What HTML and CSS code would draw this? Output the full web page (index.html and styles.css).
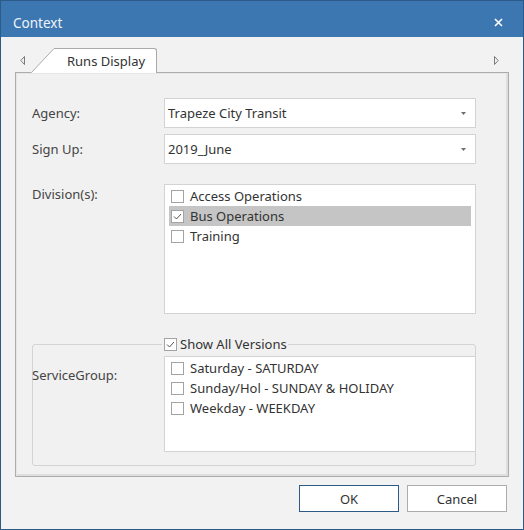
FILE: index.html
```html
<!DOCTYPE html>
<html>
<head>
<meta charset="utf-8">
<link rel="stylesheet" href="styles.css">
</head>
<body>
<div class="window">
  <div class="titlebar">
    <span class="title">Context</span>
    <svg class="close" width="9" height="9" viewBox="0 0 9 9"><path d="M1 1L8 8M8 1L1 8" stroke="#fff" stroke-width="1.6" fill="none"/></svg>
  </div>
  <div class="body">
    <div class="tabrow">
      <svg class="nav nav-left" width="5" height="9" viewBox="0 0 5 9"><path d="M4.5 0.5L0.8 4.5L4.5 8.5Z" fill="none" stroke="#7a7a7a" stroke-width="1"/></svg>
      <div class="tab">
        <svg class="tab-slant" width="23" height="25" viewBox="0 0 23 25"><path d="M0 25L23 0L23 25Z" fill="#fff"/><path d="M0.5 24.5L23 0.5" stroke="#a9a9a9" stroke-width="1" fill="none"/></svg>
        <div class="tab-label">Runs Display</div>
      </div>
      <svg class="nav nav-right" width="5" height="9" viewBox="0 0 5 9"><path d="M0.5 0.5L4.2 4.5L0.5 8.5Z" fill="none" stroke="#7a7a7a" stroke-width="1"/></svg>
    </div>
    <div class="panel">
      <div class="row row-combo">
        <div class="lbl">Agency:</div>
        <div class="combo"><span>Trapeze City Transit</span><svg class="drop" width="5" height="3" viewBox="0 0 5 3"><path d="M0 0H5L2.5 3Z" fill="#6e6e6e"/></svg></div>
      </div>
      <div class="row row-combo row-signup">
        <div class="lbl">Sign Up:</div>
        <div class="combo"><span>2019_June</span><svg class="drop" width="5" height="3" viewBox="0 0 5 3"><path d="M0 0H5L2.5 3Z" fill="#6e6e6e"/></svg></div>
      </div>
      <div class="row row-div">
        <div class="lbl lbl-list">Division(s):</div>
        <div class="checklist divisions">
          <div class="item"><span class="cb"></span><span>Access Operations</span></div>
          <div class="item selected"><span class="cb"><svg width="11" height="11" viewBox="0 0 11 11"><path d="M2 5.5L4.5 8L9 3" stroke="#555" stroke-width="1" fill="none"/></svg></span><span>Bus Operations</span></div>
          <div class="item"><span class="cb"></span><span>Training</span></div>
        </div>
      </div>
      <fieldset class="group">
        <legend class="legend"><span class="cb"><svg width="11" height="11" viewBox="0 0 11 11"><path d="M2 5.5L4.5 8L9 3" stroke="#555" stroke-width="1" fill="none"/></svg></span><span>Show All Versions</span></legend>
        <div class="group-row">
          <div class="lbl lbl-group">ServiceGroup:</div>
          <div class="checklist services">
            <div class="item"><span class="cb"></span><span>Saturday - SATURDAY</span></div>
            <div class="item"><span class="cb"></span><span>Sunday/Hol - SUNDAY &amp; HOLIDAY</span></div>
            <div class="item"><span class="cb"></span><span>Weekday - WEEKDAY</span></div>
          </div>
        </div>
      </fieldset>
    </div>
    <div class="footer">
      <button class="btn btn-ok">OK</button>
      <button class="btn">Cancel</button>
    </div>
  </div>
</div>
</body>
</html>
```
FILE: styles.css
```css
* { box-sizing: border-box; }
html, body { margin: 0; padding: 0; }
body {
  width: 524px;
  height: 530px;
  font-family: "Noto Sans", "Open Sans", sans-serif;
  font-size: 13px;
  color: #333;
  background: #f2f2f2;
}
.window {
  width: 524px;
  height: 530px;
  border: 1px solid #2c5b8a;
  border-top: 0;
  background: #f2f2f2;
  display: flex;
  flex-direction: column;
}
.titlebar {
  height: 37px;
  background: #3d77b1;
  border-top: 1px solid #2c5b8a;
  display: flex;
  align-items: center;
  justify-content: space-between;
  padding: 7px 20px 0 12px;
  color: #fff;
}
.title {
  font-size: 13.5px;
  color: #eef3f9;
}
.close { display: block; }
.body {
  padding: 0 14px;
  display: flex;
  flex-direction: column;
}
.tabrow {
  display: flex;
  align-items: center;
  padding-top: 11px;
  margin-bottom: -1px;
  position: relative;
  z-index: 1;
}
.nav { display: block; }
.nav-left { margin: 0 6px 0 5px; }
.nav-right { margin: 0 10px 0 auto; }
.tab {
  display: flex;
  height: 25px;
}
.tab-slant { display: block; }
.tab-label {
  background: #fff;
  border-top: 1px solid #a9a9a9;
  border-right: 1px solid #a9a9a9;
  border-top-right-radius: 3px;
  padding: 0 11px 0 13px;
  display: flex;
  align-items: center;
  color: #333;
}
.panel {
  height: 405px;
  border: 1px solid #acacac;
  background: #f1f1f1;
  box-shadow: inset 1px 1px 0 #e6e6e6, inset -2px -2px 0 #dedede;
  padding: 25px 32px 10px 16px;
}
.row {
  display: flex;
}
.row-combo { align-items: center; height: 30px; }
.row-signup { margin-top: 6px; }
.row-div { margin-top: 20px; }
.lbl {
  width: 132px;
  flex: none;
  color: #444;
  line-height: 16px;
}
.lbl-list { padding-top: 2px; }
.combo {
  width: 312px;
  height: 30px;
  background: #fff;
  border: 1px solid #d3d3d3;
  display: flex;
  align-items: center;
  justify-content: space-between;
  padding: 0 9px 0 3px;
  color: #333;
}
.drop { display: block; }
.checklist {
  background: #fff;
  border: 1px solid #d3d3d3;
  padding: 1px 4px;
}
.divisions {
  width: 312px;
  height: 130px;
}
.item {
  height: 20px;
  display: flex;
  align-items: center;
  padding-left: 2px;
  gap: 6px;
  color: #333;
  line-height: 16px;
}
.item.selected { background: #c5c5c5; }
.cb {
  width: 13px;
  height: 13px;
  flex: none;
  border: 1px solid #a3a3a3;
  background: #fff;
  display: flex;
  align-items: center;
  justify-content: center;
}
.cb svg { display: block; }
.group {
  margin: 22px 0 0 0;
  padding: 0 0 13px 0;
  min-width: 0;
  width: 444px;
  border: 1px solid #d4d4d4;
  border-radius: 3px;
}
.legend {
  margin-left: 129px;
  padding: 0 1px 0 2px;
  display: flex;
  align-items: center;
  gap: 3px;
  height: 16px;
  line-height: 16px;
  color: #333;
}
.group-row {
  display: flex;
  margin-top: 4px;
}
.lbl-group {
  width: 132px;
  margin-left: -1px;
  padding-top: 11px;
}
.services {
  width: 312px;
  height: 96px;
  margin-right: -1px;
}
.footer {
  display: flex;
  justify-content: flex-end;
  gap: 8px;
  margin-top: 8px;
  padding-right: 2px;
}
.btn {
  width: 100px;
  height: 27px;
  background: #fff;
  border: 1px solid #acacac;
  font-family: "Noto Sans", "Open Sans", sans-serif;
  font-size: 13px;
  color: #333;
  padding: 0;
}
.btn-ok { border-color: #2c5b8a; }
```
